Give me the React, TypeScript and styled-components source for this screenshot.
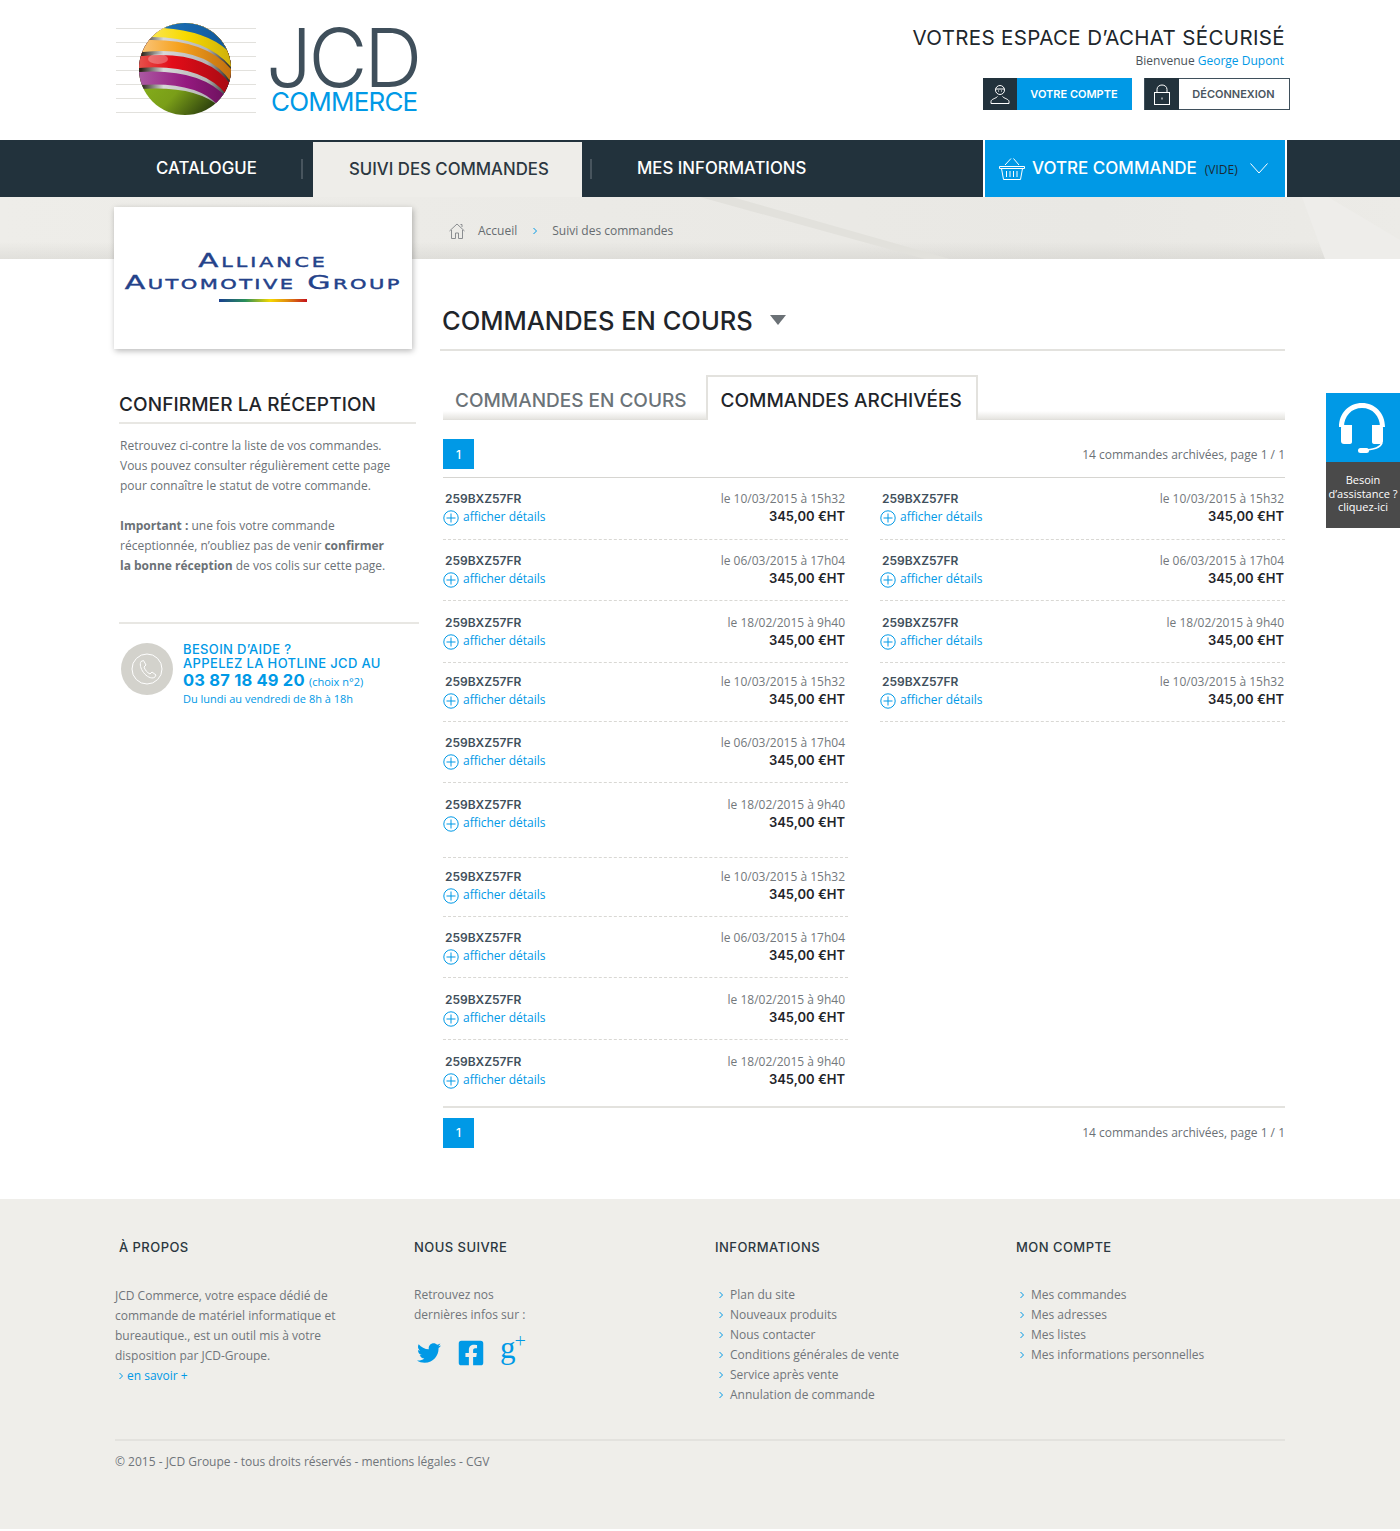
import React from "react";
import styled, { createGlobalStyle } from "styled-components";
import { FaTwitter, FaFacebookSquare } from "react-icons/fa";

const BLUE = "#0099e6";
const DARK = "#22323c";
const HEAD = '"Inter", "Liberation Sans", sans-serif';
const BODY = '"Open Sans", "Liberation Sans", sans-serif';

const GlobalStyle = createGlobalStyle`
  html, body { margin: 0; padding: 0; background: #fff; }
  body { font-family: ${BODY}; font-size: 12px; color: #6b7176; }
  * { box-sizing: border-box; }
  p, h1, h2, h3, ul { margin: 0; padding: 0; }
  li { list-style: none; }
`;

const Page = styled.div`
  width: 1400px;
  height: 1531px;
  position: relative;
  overflow: hidden;
`;

/* header */
const Header = styled.header`
  height: 140px;
  padding: 23px 110px 0 116px;
  display: flex;
  justify-content: space-between;
`;
const LogoWrap = styled.div`
  display: flex;
  gap: 14px;
`;
const LogoWords = styled.div`
  display: flex;
  flex-direction: column;
  width: 150px;
`;
const LogoJcd = styled.span`
  font-family: ${HEAD};
  font-weight: 300;
  font-size: 81px;
  line-height: 62px;
  height: 62px;
  margin: 4px 0 0 -4px;
  letter-spacing: -3.5px;
  color: #3f4f5b;
`;
const LogoCommerce = styled.span`
  font-family: ${HEAD};
  font-size: 26px;
  line-height: 26px;
  letter-spacing: -0.8px;
  color: ${BLUE};
  margin-left: 1px;
`;
const HeaderRight = styled.div`
  display: flex;
  flex-direction: column;
  align-items: flex-end;
`;
const Slogan = styled.h1`
  font-family: ${HEAD};
  font-weight: 400;
  font-size: 20.5px;
  line-height: 29px;
  letter-spacing: 0.35px;
  color: #20262b;
  margin: 0 5px 0 0;
`;
const Welcome = styled.p`
  font-size: 12px;
  line-height: 16px;
  margin: 1px 6px 9px 0;
  color: #4a5259;
`;
const Accent = styled.span`
  color: ${BLUE};
`;
const AccountRow = styled.div`
  display: flex;
  gap: 12px;
`;
const AccountButton = styled.a<{ $primary?: boolean }>`
  display: flex;
  height: 32px;
  width: ${(p) => (p.$primary ? 149 : 146)}px;
  background: ${(p) => (p.$primary ? BLUE : "#fff")};
  border: ${(p) => (p.$primary ? "none" : "1px solid #3f4f5b")};
  color: ${(p) => (p.$primary ? "#fff" : "#4a5560")};
  font-family: ${HEAD};
  font-size: 11px;
  font-weight: 600;
  align-items: center;
`;
const AccountIcon = styled.span`
  width: 34px;
  height: 32px;
  flex: none;
  background: ${DARK};
  display: flex;
  align-items: center;
  justify-content: center;
`;
const AccountLabel = styled.span`
  flex: 1;
  text-align: center;
  margin-right: 1px;
`;

/* nav */
const NavBar = styled.nav`
  height: 57px;
  background: ${DARK};
  display: flex;
  padding-left: 120px;
`;
const NavLink = styled.a<{ $active?: boolean; $w: number; $left: number }>`
  display: flex;
  align-items: center;
  width: ${(p) => p.$w}px;
  padding: 0 0 2px ${(p) => p.$left}px;
  margin-top: ${(p) => (p.$active ? "2px" : 0)};
  background: ${(p) => (p.$active ? "#eeede9" : "transparent")};
  color: ${(p) => (p.$active ? "#2b3740" : "#fff")};
  font-family: ${HEAD};
  font-size: 16.8px;
  font-weight: 500;
  white-space: nowrap;
`;
const NavSep = styled.span<{ $before: number; $after: number }>`
  width: 2px;
  height: 20px;
  align-self: center;
  background: #48555e;
  margin: 0 ${(p) => p.$after}px 0 ${(p) => p.$before}px;
`;
const CartTab = styled.a`
  margin: 0 113px 0 auto;
  width: 304px;
  background: ${BLUE};
  border-left: 2px solid #fff;
  border-right: 2px solid #fff;
  display: flex;
  align-items: center;
  padding-left: 14px;
  color: #fff;
  font-family: ${HEAD};
  font-size: 17px;
  font-weight: 500;
`;
const CartLabel = styled.span`
  margin-left: 7px;
  margin-bottom: 2px;
`;
const CartEmpty = styled.span`
  font-family: ${BODY};
  font-size: 12px;
  font-weight: 400;
  color: #1c2a33;
  margin: 2px 12px 0 8px;
`;

/* breadcrumb */
const Band = styled.div`
  height: 62px;
  position: relative;
  background:
    linear-gradient(180deg, transparent 72%, rgba(90, 88, 80, 0.09) 100%),
    linear-gradient(90deg, #eeede9 0, #ebeae6 600px, #e9e8e4 1100px, #ecebe7 1400px);
  padding: 5px 0 0 449px;
  display: flex;
  align-items: center;
  gap: 13px;
  font-size: 12px;
  color: #666c70;

  &::before {
    content: "";
    position: absolute;
    inset: 0;
    background: #e2e1dc;
    clip-path: polygon(700px 0, 732px 0, 950px 62px, 925px 62px);
  }
  &::after {
    content: "";
    position: absolute;
    inset: 0;
    background: #eeedea;
    clip-path: polygon(1302px 0, 1328px 0, 1400px 43px, 1400px 62px, 1325px 62px);
  }
`;
const BandItem = styled.span`
  position: relative;
  z-index: 1;
  display: flex;
  align-items: center;
`;
const ChevronGap = styled.span`
  position: relative;
  z-index: 1;
  display: flex;
  margin: 1px 1px 0 2px;
`;

/* main layout */
const Main = styled.div`
  display: flex;
  height: 940px;
  padding-left: 114px;
`;
const Sidebar = styled.aside`
  width: 306px;
  flex: none;
  margin-top: -52px;
  position: relative;
  z-index: 2;
`;
const BrandCard = styled.div`
  width: 298px;
  height: 142px;
  background: #fff;
  box-shadow: 1px 2px 6px rgba(0, 0, 0, 0.28);
  display: flex;
  flex-direction: column;
  align-items: center;
  padding-top: 42px;
`;
const BrandLine = styled.span<{ $wide?: boolean }>`
  font-family: "DejaVu Sans", sans-serif;
  font-variant: small-caps;
  font-weight: 400;
  font-size: 20px;
  line-height: 22px;
  color: #24428a;
  -webkit-text-stroke: 0.4px #24428a;
  white-space: nowrap;
  letter-spacing: ${(p) => (p.$wide ? "1.6px" : "2px")};
  transform: scaleX(${(p) => (p.$wide ? 1.5 : 1.47)});
`;
const BrandBar = styled.span`
  width: 88px;
  height: 3px;
  margin-top: 6px;
  background: linear-gradient(90deg, #1a3f8f, #2a8f5a 30%, #f5d800 58%, #e08a10 78%, #c4121c);
`;
const SideTitle = styled.h2`
  font-family: ${HEAD};
  font-weight: 500;
  font-size: 19px;
  line-height: 24px;
  letter-spacing: 0.1px;
  color: #1f252a;
  margin: 44px 4px 0 5px;
  padding-bottom: 5px;
  border-bottom: 2px solid #e8e7e3;
  white-space: nowrap;
`;
const SideText = styled.p`
  font-size: 12px;
  line-height: 20px;
  color: #6b7176;
  margin: 12px 0 0 6px;
  white-space: nowrap;
`;
const Strong = styled.b`
  font-weight: 700;
`;
const HelpBox = styled.div`
  margin: 46px 0 0 5px;
  width: 300px;
  border-top: 2px solid #e8e7e3;
  padding: 19px 0 0 2px;
  display: flex;
  gap: 10px;
`;
const HelpCircle = styled.span`
  width: 52px;
  height: 52px;
  border-radius: 50%;
  background: #d3d2cc;
  display: flex;
  align-items: center;
  justify-content: center;
  flex: none;
`;
const HelpText = styled.div`
  color: ${BLUE};
  font-family: ${HEAD};
  font-size: 13px;
  line-height: 14px;
  font-weight: 500;
  letter-spacing: 0.35px;
  margin-top: -1px;
`;
const HelpPhone = styled.div`
  font-size: 16.5px;
  font-weight: 700;
  line-height: 20px;
  letter-spacing: 0.2px;
`;
const HelpSmall = styled.span`
  font-family: ${BODY};
  font-size: 11px;
  font-weight: 400;
  letter-spacing: 0;
`;
const HelpHours = styled.div`
  font-family: ${BODY};
  font-size: 11px;
  font-weight: 400;
  line-height: 14px;
  letter-spacing: 0;
`;

/* content */
const Content = styled.main`
  width: 845px;
  margin-left: 20px;
`;
const PageTitleRow = styled.div`
  height: 92px;
  display: flex;
  align-items: flex-end;
  gap: 17px;
  padding: 0 0 12px 2px;
  border-bottom: 2px solid #e3e2de;
`;
const PageTitle = styled.h1`
  font-family: ${HEAD};
  font-weight: 500;
  font-size: 25.5px;
  line-height: 32px;
  color: #1f252a;
`;
const Caret = styled.span`
  width: 0;
  height: 0;
  border-left: 8px solid transparent;
  border-right: 8px solid transparent;
  border-top: 10px solid #6b7176;
  margin-bottom: 12px;
`;
const TabBar = styled.div`
  display: flex;
  height: 45px;
  margin: 24px 0 0 3px;
  background: linear-gradient(180deg, transparent 36px, #e6e5e1 44px, #dddcd8 45px);
  align-items: flex-end;
`;
const Tab = styled.a<{ $active?: boolean }>`
  height: ${(p) => (p.$active ? "45px" : "44px")};
  font-family: ${HEAD};
  font-weight: 500;
  font-size: 19px;
  display: flex;
  align-items: center;
  padding: ${(p) => (p.$active ? "4px 14px 0 13px" : "4px 19px 0 12px")};
  color: ${(p) => (p.$active ? "#1f252a" : "#6b7378")};
  background: ${(p) => (p.$active ? "#fff" : "transparent")};
  border: ${(p) => (p.$active ? "2px solid #e3e2de" : "none")};
  border-bottom: none;
  white-space: nowrap;
`;
const Pager = styled.div<{ $bottom?: boolean }>`
  margin-left: 3px;
  display: flex;
  justify-content: space-between;
  align-items: center;
  height: ${(p) => (p.$bottom ? "55px" : "57px")};
  padding: ${(p) => (p.$bottom ? "0 0 6px" : "11px 0 0")};
  font-size: 12px;
  color: #6b7176;
`;
const PageNum = styled.span`
  width: 31px;
  height: 30px;
  background: ${BLUE};
  color: #fff;
  font-family: ${HEAD};
  font-size: 12px;
  font-weight: 500;
  display: flex;
  align-items: center;
  justify-content: center;
`;
const OrderGrid = styled.div`
  margin-left: 3px;
  display: flex;
  gap: 32px;
  border-top: 1px solid #d6d5d1;
  border-bottom: 2px solid #e3e2de;
  height: 631px;
`;
const OrderColumn = styled.div`
  width: 405px;
`;
const OrderRow = styled.div<{ $h: number; $pad: number; $last?: boolean }>`
  height: ${(p) => p.$h}px;
  padding-top: ${(p) => p.$pad}px;
  border-bottom: ${(p) => (p.$last ? "none" : "1px dashed #d9d8d4")};
  display: flex;
  justify-content: space-between;
`;
const OrderLeft = styled.div`
  display: flex;
  flex-direction: column;
`;
const OrderRight = styled.div<{ $edge: number }>`
  display: flex;
  flex-direction: column;
  align-items: flex-end;
  padding-right: ${(p) => p.$edge}px;
`;
const OrderId = styled.span`
  font-family: ${HEAD};
  font-size: 12px;
  font-weight: 600;
  line-height: 18px;
  margin-left: 2px;
  color: #3f4f5b;
`;
const Details = styled.a`
  display: flex;
  align-items: center;
  gap: 4px;
  font-size: 12px;
  line-height: 20px;
  margin-top: -1px;
  color: ${BLUE};
`;
const DetailsIcon = styled.span`
  display: flex;
  margin-top: 2px;
`;
const OrderDate = styled.span`
  font-size: 12px;
  line-height: 18px;
  color: #73787c;
`;
const OrderPrice = styled.span`
  font-family: ${HEAD};
  font-size: 13px;
  font-weight: 600;
  line-height: 18px;
  margin-top: -1px;
  color: #1f252a;
`;

/* footer */
const Footer = styled.footer`
  height: 330px;
  background: #efeeea;
  padding: 39px 115px 0;
`;
const FooterCols = styled.div`
  display: flex;
  height: 203px;
  border-bottom: 2px solid #e3e2de;
`;
const FooterCol = styled.div<{ $w: number }>`
  width: ${(p) => p.$w}px;
  flex: none;
`;
const FooterTitle = styled.h3<{ $indent?: number }>`
  font-family: ${HEAD};
  font-weight: 500;
  font-size: 13px;
  line-height: 18px;
  letter-spacing: 0.45px;
  color: #2b3740;
  margin: 0 0 29px ${(p) => p.$indent || 0}px;
`;
const FooterText = styled.p<{ $low?: boolean }>`
  font-size: 12px;
  line-height: 20px;
  color: #70757a;
  position: relative;
  top: ${(p) => (p.$low ? "1px" : 0)};
`;
const FooterLink = styled.li<{ $blue?: boolean }>`
  font-size: 12px;
  line-height: 20px;
  color: ${(p) => (p.$blue ? BLUE : "#70757a")};
  display: flex;
  align-items: center;
  gap: ${(p) => (p.$blue ? 3 : 6)}px;
`;
const LinkList = styled.ul<{ $nudge?: boolean }>`
  padding-left: 3px;
  margin-top: ${(p) => (p.$nudge ? "1px" : 0)};
`;
const SocialRow = styled.div`
  display: flex;
  align-items: center;
  gap: 16px;
  margin: 11px 0 0 3px;
  color: ${BLUE};
`;
const GooglePlus = styled.span`
  font-family: "Liberation Serif", serif;
  font-size: 31px;
  line-height: 24px;
  height: 26px;
  margin: 0 0 8px -1px;
  display: flex;
`;
const PlusMark = styled.span`
  font-family: ${BODY};
  font-weight: 300;
  font-size: 20px;
  line-height: 10px;
  margin-left: -1px;
`;
const Copyright = styled.p`
  font-size: 12px;
  line-height: 20px;
  margin-top: 11px;
  color: #70757a;
`;

/* floating help */
const AssistWidget = styled.a`
  position: absolute;
  top: 393px;
  right: 0;
  width: 74px;
  height: 135px;
  background: #4a4a4a;
  z-index: 3;
`;
const AssistTop = styled.span`
  height: 69px;
  background: ${BLUE};
  display: flex;
  align-items: center;
  justify-content: center;
  padding-right: 2px;
`;
const AssistText = styled.span`
  display: block;
  text-align: center;
  color: #fff;
  font-size: 11px;
  line-height: 13.5px;
  padding-top: 11px;
  white-space: nowrap;
`;

function Sphere() {
  const ys = [5, 19, 33, 47, 61, 75, 89];
  return (
    <svg width="140" height="92" viewBox="0 0 140 92">
      <defs>
        <clipPath id="ball">
          <circle cx="69" cy="46" r="46" />
        </clipPath>
        <linearGradient id="gBlue" x1="0" x2="1">
          <stop offset="0" stopColor="#1f78c0" />
          <stop offset="1" stopColor="#0c4d8c" />
        </linearGradient>
        <linearGradient id="gYellow" x1="0" x2="1">
          <stop offset="0" stopColor="#fdf3a0" />
          <stop offset="0.5" stopColor="#f7d900" />
          <stop offset="1" stopColor="#b89a10" />
        </linearGradient>
        <linearGradient id="gOrange" x1="0" x2="1">
          <stop offset="0" stopColor="#fbdcb8" />
          <stop offset="0.45" stopColor="#f6a21e" />
          <stop offset="1" stopColor="#a85808" />
        </linearGradient>
        <linearGradient id="gRed" x1="0" x2="1">
          <stop offset="0" stopColor="#e8806e" />
          <stop offset="0.4" stopColor="#e30c18" />
          <stop offset="1" stopColor="#8e0a10" />
        </linearGradient>
        <linearGradient id="gPurple" x1="0" x2="1">
          <stop offset="0" stopColor="#b678b4" />
          <stop offset="0.5" stopColor="#95197f" />
          <stop offset="1" stopColor="#4e0c45" />
        </linearGradient>
        <linearGradient id="gGreen" x1="0" x2="1" y1="0" y2="0.6">
          <stop offset="0.2" stopColor="#8fbe1e" />
          <stop offset="0.65" stopColor="#7a9e18" />
          <stop offset="1" stopColor="#12200a" />
        </linearGradient>
        <linearGradient id="gGap" x1="0" x2="1">
          <stop offset="0.18" stopColor="#2a2418" />
          <stop offset="0.34" stopColor="#d8d8d8" />
          <stop offset="0.65" stopColor="#b4b4b4" />
          <stop offset="0.8" stopColor="#333" />
        </linearGradient>
      </defs>
      {ys.map((y) => (
        <rect key={y} x="0" y={y} width="140" height="1" fill="#e2e1dd" />
      ))}
      <g clipPath="url(#ball)">
        <rect x="0" y="0" width="140" height="92" fill="url(#gGreen)" />
        <path d="M0,66 L23,66 Q80,62 104,84 L140,92 V0 H0 Z" fill="url(#gGap)" />
        <path d="M0,62 L23,62 Q80,58 102,82 L140,92 V0 H0 Z" fill="url(#gPurple)" />
        <path d="M0,49 L22,49 Q85,45 111,75 L140,75 V0 H0 Z" fill="url(#gGap)" />
        <path d="M0,45 L22,45 Q85,40 111,72 L140,72 V0 H0 Z" fill="url(#gRed)" />
        <path d="M0,33 L27,33 Q90,27 115,62 L140,62 V0 H0 Z" fill="url(#gGap)" />
        <path d="M0,29 L27,29 Q90,22 115,59 L140,59 V0 H0 Z" fill="url(#gOrange)" />
        <path d="M0,17 L36,17 Q90,17 115,46 L140,46 V0 H0 Z" fill="url(#gGap)" />
        <path d="M0,14 L36,14 Q90,14 115,44 L140,44 V0 H0 Z" fill="url(#gYellow)" />
        <path d="M30,0 H47 V5 Q90,8 111,27 L140,27 V0 Z" fill="url(#gBlue)" />
        <ellipse cx="42" cy="36" rx="10" ry="5" fill="#fff" opacity="0.28" />
      </g>
    </svg>
  );
}

function UserIcon() {
  return (
    <svg width="20" height="22" viewBox="0 0 20 22" fill="none" stroke="#fff" strokeWidth="1">
      <circle cx="10" cy="7" r="4.5" />
      <path d="M5.5 6 H14.5 M8 8 h1 M11 8 h1" />
      <path d="M1 20.5 V18.5 C1 16 6 15.5 7.5 13.5 M19 20.5 V18.5 C19 16 14 15.5 12.5 13.5 M1 20.5 H19" />
    </svg>
  );
}

function LockIcon() {
  return (
    <svg width="16" height="21" viewBox="0 0 16 21" fill="none" stroke="#fff" strokeWidth="1">
      <rect x="0.5" y="8.5" width="15" height="12" />
      <path d="M3 8.5 V5.5 C3 -0.5 13 -0.5 13 5.5 V8.5 M8 13.5 V15.5" />
    </svg>
  );
}

function BasketIcon() {
  return (
    <svg width="26" height="24" viewBox="0 0 26 24" fill="none" stroke="#fff" strokeWidth="1">
      <path d="M0.5 9.5 H25.5 V11.5 H0.5 Z M2.5 11.5 L4.5 22.5 H21.5 L23.5 11.5" />
      <path d="M6 8 L12 1.5 M20 8 L14.5 1.5 M7.5 14 V20 M11 14 V20 M14.5 14 V20 M18 14 V20" />
    </svg>
  );
}

function ArrowDown() {
  return (
    <svg width="18" height="11" viewBox="0 0 18 11" fill="none" stroke="#fff" strokeWidth="1">
      <path d="M0.5 0.5 L9 10 L17.5 0.5" />
    </svg>
  );
}

function HomeIcon() {
  return (
    <svg width="16" height="16" viewBox="0 0 16 16" fill="none" stroke="#8a8d90" strokeWidth="1">
      <path d="M0.5 8 L8 1 L15.5 8 M2.5 7 V15.5 H6.5 V10 H9.5 V15.5 H13.5 V7 M11.5 1.5 H13 V4" />
    </svg>
  );
}

function SmallChevron() {
  return (
    <svg width="6" height="8" viewBox="0 0 6 8" fill="none" stroke={BLUE} strokeWidth="1" style={{ flex: "none" }}>
      <path d="M1.5 1 L4.5 4 L1.5 7" />
    </svg>
  );
}

function PlusIcon() {
  return (
    <svg width="16" height="16" viewBox="0 0 16 16" fill="none" stroke={BLUE} strokeWidth="1">
      <circle cx="8" cy="8" r="7.2" />
      <path d="M8 3.5 V12.5 M3.5 8 H12.5" />
    </svg>
  );
}

function PhoneIcon() {
  return (
    <svg width="32" height="32" viewBox="0 0 32 32" fill="none" stroke="#fff" strokeWidth="1">
      <circle cx="16" cy="16" r="15" />
      <path d="M10 8.5 L12.5 7.5 L15 12 L13 14 C14 17 16 19.5 19 21 L21 19 L25 22 L23.5 24.5 C20 26 15.5 23.5 12.5 19.5 C9.5 15.5 8.5 11 10 8.5 Z" />
    </svg>
  );
}

function HeadsetIcon() {
  return (
    <svg width="46" height="50" viewBox="0 0 46 50" fill="#fff">
      <path d="M5 24 C5 13 12.5 5 23 5 C33.5 5 41 13 41 24 H46 C46 10 36 0 23 0 C10 0 0 10 0 24 Z" />
      <path d="M2 25 C2 23 3 22 5 22 H13 V39 C13 40 12 41 11 41 H5 C3 41 2 40 2 38 Z" />
      <path d="M33 22 H41 C43 22 44 23 44 25 V38 C44 40 43 41 41 41 H35 C34 41 33 40 33 39 Z" />
      <path d="M43 40 C41 45 35 46 28 47" fill="none" stroke="#fff" strokeWidth="1.6" />
      <rect x="19" y="45" width="11" height="5" rx="2.5" />
    </svg>
  );
}

type Order = { date: string; h: number; pad: number; last?: boolean };

const D1 = "le 10/03/2015 à 15h32";
const D2 = "le 06/03/2015 à 17h04";
const D3 = "le 18/02/2015 à 9h40";

const LEFT_ORDERS: Order[] = [
  { date: D1, h: 62, pad: 12 },
  { date: D2, h: 61, pad: 12 },
  { date: D3, h: 62, pad: 13 },
  { date: D1, h: 59, pad: 10 },
  { date: D2, h: 61, pad: 12 },
  { date: D3, h: 75, pad: 13 },
  { date: D1, h: 59, pad: 10 },
  { date: D2, h: 61, pad: 12 },
  { date: D3, h: 62, pad: 13 },
  { date: D3, h: 67, pad: 13, last: true },
];

const RIGHT_ORDERS: Order[] = [
  { date: D1, h: 62, pad: 12 },
  { date: D2, h: 61, pad: 12 },
  { date: D3, h: 62, pad: 13 },
  { date: D1, h: 59, pad: 10 },
];

const INFO_LINKS = [
  "Plan du site",
  "Nouveaux produits",
  "Nous contacter",
  "Conditions générales de vente",
  "Service après vente",
  "Annulation de commande",
];

const ACCOUNT_LINKS = [
  "Mes commandes",
  "Mes adresses",
  "Mes listes",
  "Mes informations personnelles",
];

function OrderList({ orders, edge }: { orders: Order[]; edge: number }) {
  return (
    <OrderColumn>
      {orders.map((o, idx) => (
        <OrderRow key={idx} $h={o.h} $pad={o.pad} $last={o.last}>
          <OrderLeft>
            <OrderId>259BXZ57FR</OrderId>
            <Details>
              <DetailsIcon>
                <PlusIcon />
              </DetailsIcon>
              afficher détails
            </Details>
          </OrderLeft>
          <OrderRight $edge={edge}>
            <OrderDate>{o.date}</OrderDate>
            <OrderPrice>345,00 €HT</OrderPrice>
          </OrderRight>
        </OrderRow>
      ))}
    </OrderColumn>
  );
}

export default function App() {
  return (
    <Page>
      <GlobalStyle />
      <Header>
        <LogoWrap>
          <Sphere />
          <LogoWords>
            <LogoJcd>JCD</LogoJcd>
            <LogoCommerce>COMMERCE</LogoCommerce>
          </LogoWords>
        </LogoWrap>
        <HeaderRight>
          <Slogan>VOTRES ESPACE D’ACHAT SÉCURISÉ</Slogan>
          <Welcome>
            Bienvenue <Accent>George Dupont</Accent>
          </Welcome>
          <AccountRow>
            <AccountButton $primary>
              <AccountIcon>
                <UserIcon />
              </AccountIcon>
              <AccountLabel>VOTRE COMPTE</AccountLabel>
            </AccountButton>
            <AccountButton>
              <AccountIcon>
                <LockIcon />
              </AccountIcon>
              <AccountLabel>DÉCONNEXION</AccountLabel>
            </AccountButton>
          </AccountRow>
        </HeaderRight>
      </Header>

      <NavBar>
        <NavLink $w={181} $left={36}>
          CATALOGUE
        </NavLink>
        <NavSep $before={0} $after={10} />
        <NavLink $active $w={269} $left={36}>
          SUIVI DES COMMANDES
        </NavLink>
        <NavSep $before={8} $after={0} />
        <NavLink $w={217} $left={45}>
          MES INFORMATIONS
        </NavLink>
        <CartTab>
          <BasketIcon />
          <CartLabel>VOTRE COMMANDE</CartLabel>
          <CartEmpty>(VIDE)</CartEmpty>
          <ArrowDown />
        </CartTab>
      </NavBar>

      <Band>
        <BandItem>
          <HomeIcon />
        </BandItem>
        <BandItem>Accueil</BandItem>
        <ChevronGap>
          <SmallChevron />
        </ChevronGap>
        <BandItem>Suivi des commandes</BandItem>
      </Band>

      <Main>
        <Sidebar>
          <BrandCard>
            <BrandLine>Alliance</BrandLine>
            <BrandLine $wide>Automotive Group</BrandLine>
            <BrandBar />
          </BrandCard>
          <SideTitle>CONFIRMER LA RÉCEPTION</SideTitle>
          <SideText>
            Retrouvez ci-contre la liste de vos commandes.
            <br />
            Vous pouvez consulter régulièrement cette page
            <br />
            pour connaître le statut de votre commande.
            <br />
            <br />
            <Strong>Important :</Strong> une fois votre commande
            <br />
            réceptionnée, n’oubliez pas de venir <Strong>confirmer</Strong>
            <br />
            <Strong>la bonne réception</Strong> de vos colis sur cette page.
          </SideText>
          <HelpBox>
            <HelpCircle>
              <PhoneIcon />
            </HelpCircle>
            <HelpText>
              BESOIN D’AIDE ?
              <br />
              APPELEZ LA HOTLINE JCD AU
              <HelpPhone>
                03 87 18 49 20 <HelpSmall>(choix n°2)</HelpSmall>
              </HelpPhone>
              <HelpHours>Du lundi au vendredi de 8h à 18h</HelpHours>
            </HelpText>
          </HelpBox>
        </Sidebar>

        <Content>
          <PageTitleRow>
            <PageTitle>COMMANDES EN COURS</PageTitle>
            <Caret />
          </PageTitleRow>
          <TabBar>
            <Tab>COMMANDES EN COURS</Tab>
            <Tab $active>COMMANDES ARCHIVÉES</Tab>
          </TabBar>
          <Pager>
            <PageNum>1</PageNum>
            <span>14 commandes archivées, page 1 / 1</span>
          </Pager>
          <OrderGrid>
            <OrderList orders={LEFT_ORDERS} edge={3} />
            <OrderList orders={RIGHT_ORDERS} edge={1} />
          </OrderGrid>
          <Pager $bottom>
            <PageNum>1</PageNum>
            <span>14 commandes archivées, page 1 / 1</span>
          </Pager>
        </Content>
      </Main>

      <Footer>
        <FooterCols>
          <FooterCol $w={299}>
            <FooterTitle $indent={4}>À PROPOS</FooterTitle>
            <FooterText $low>
              JCD Commerce, votre espace dédié de
              <br />
              commande de matériel informatique et
              <br />
              bureautique., est un outil mis à votre
              <br />
              disposition par JCD-Groupe.
            </FooterText>
            <LinkList $nudge>
              <FooterLink $blue>
                <SmallChevron />
                en savoir +
              </FooterLink>
            </LinkList>
          </FooterCol>
          <FooterCol $w={301}>
            <FooterTitle>NOUS SUIVRE</FooterTitle>
            <FooterText>
              Retrouvez nos
              <br />
              dernières infos sur :
            </FooterText>
            <SocialRow>
              <FaTwitter size={24} />
              <FaFacebookSquare size={28} />
              <GooglePlus>
                g<PlusMark>+</PlusMark>
              </GooglePlus>
            </SocialRow>
          </FooterCol>
          <FooterCol $w={301}>
            <FooterTitle>INFORMATIONS</FooterTitle>
            <LinkList>
              {INFO_LINKS.map((l) => (
                <FooterLink key={l}>
                  <SmallChevron />
                  {l}
                </FooterLink>
              ))}
            </LinkList>
          </FooterCol>
          <FooterCol $w={269}>
            <FooterTitle>MON COMPTE</FooterTitle>
            <LinkList>
              {ACCOUNT_LINKS.map((l) => (
                <FooterLink key={l}>
                  <SmallChevron />
                  {l}
                </FooterLink>
              ))}
            </LinkList>
          </FooterCol>
        </FooterCols>
        <Copyright>© 2015 - JCD Groupe - tous droits réservés - mentions légales - CGV</Copyright>
      </Footer>

      <AssistWidget>
        <AssistTop>
          <HeadsetIcon />
        </AssistTop>
        <AssistText>
          Besoin
          <br />
          d’assistance ?
          <br />
          cliquez-ici
        </AssistText>
      </AssistWidget>
    </Page>
  );
}
